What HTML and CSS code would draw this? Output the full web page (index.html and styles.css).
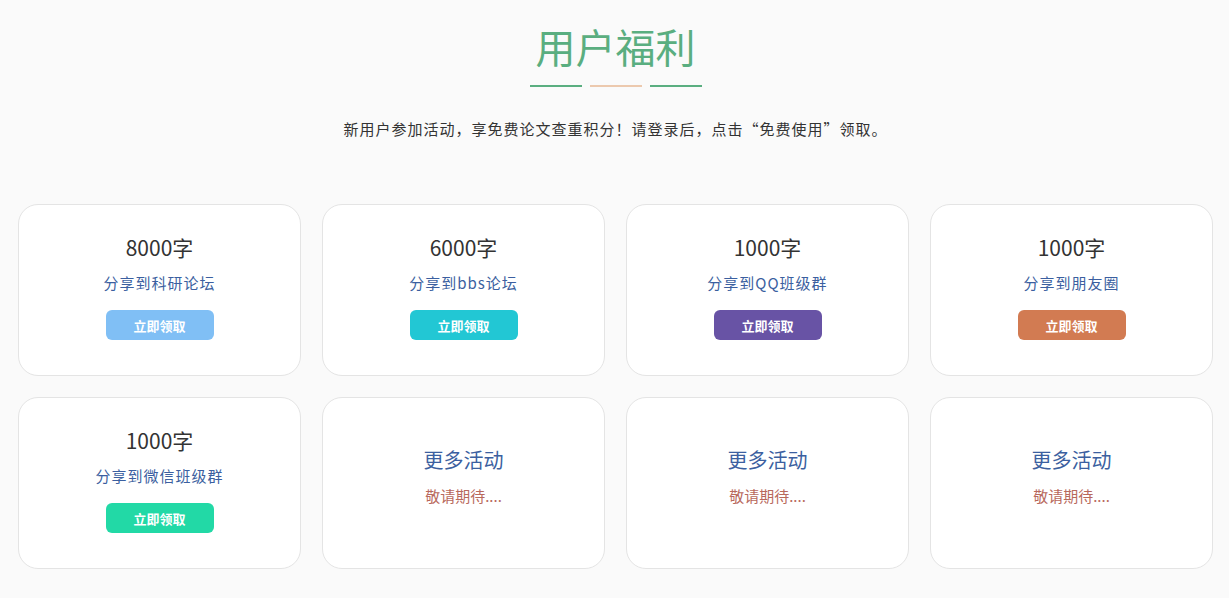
FILE: index.html
```html
<!DOCTYPE html>
<html lang="zh-CN">
<head>
  <meta charset="UTF-8" />
  <meta name="viewport" content="width=device-width, initial-scale=1.0"/>
  <title>用户福利</title>
  <link rel="stylesheet" href="styles.css">
</head>
<body>
  <div class="welfare">
    <h1 class="welfare-title">用户福利</h1>
    <div class="title-lines">
      <span class="line green"></span>
      <span class="line tan"></span>
      <span class="line green"></span>
    </div>
    <p class="welfare-desc">新用户参加活动，享免费论文查重积分！请登录后，点击“免费使用”领取。</p>

    <div class="card-grid">
      <div class="card">
        <div class="card-amount">8000字</div>
        <div class="card-name">分享到科研论坛</div>
        <button class="get-btn btn-sky">立即领取</button>
      </div>
      <div class="card">
        <div class="card-amount">6000字</div>
        <div class="card-name">分享到bbs论坛</div>
        <button class="get-btn btn-cyan">立即领取</button>
      </div>
      <div class="card">
        <div class="card-amount">1000字</div>
        <div class="card-name">分享到QQ班级群</div>
        <button class="get-btn btn-purple">立即领取</button>
      </div>
      <div class="card">
        <div class="card-amount">1000字</div>
        <div class="card-name">分享到朋友圈</div>
        <button class="get-btn btn-orange">立即领取</button>
      </div>
      <div class="card">
        <div class="card-amount">1000字</div>
        <div class="card-name">分享到微信班级群</div>
        <button class="get-btn btn-green">立即领取</button>
      </div>
      <div class="card more">
        <div class="more-title">更多活动</div>
        <div class="more-sub">敬请期待....</div>
      </div>
      <div class="card more">
        <div class="more-title">更多活动</div>
        <div class="more-sub">敬请期待....</div>
      </div>
      <div class="card more">
        <div class="more-title">更多活动</div>
        <div class="more-sub">敬请期待....</div>
      </div>
    </div>
  </div>
</body>
</html>
```

FILE: styles.css
```css
body {
  font-family: "Noto Sans CJK SC", "Noto Sans", sans-serif;
  background-color: #fafafa;
  margin: 0;
  color: #333;
}
.welfare {
  padding: 18px 16px 0 18px;
}
.welfare-title {
  text-align: center;
  font-size: 40px;
  font-weight: 400;
  color: #5aae80;
  margin: 0;
  line-height: 56px;
}
.title-lines {
  display: flex;
  justify-content: center;
  gap: 8px;
  margin-top: 11px;
}
.line {
  width: 52px;
  height: 2px;
}
.line.green {
  background-color: #5aae80;
}
.line.tan {
  background-color: #ecc9ae;
}
.welfare-desc {
  text-align: center;
  font-size: 15px;
  letter-spacing: 1px;
  margin: 32px 0 0;
  line-height: 20px;
  color: #333;
}
.card-grid {
  display: grid;
  grid-template-columns: repeat(4, 1fr);
  gap: 21px;
  margin-top: 65px;
}
.card {
  background: #fff;
  border: 1px solid #e4e4e4;
  border-radius: 20px;
  height: 172px;
  display: flex;
  flex-direction: column;
  align-items: center;
  box-sizing: border-box;
  padding-top: 28px;
}
.card-amount {
  font-size: 21px;
  line-height: 28px;
  color: #333;
}
.card-name {
  font-size: 15px;
  letter-spacing: 1px;
  line-height: 22px;
  color: #3b5fa0;
  margin-top: 11px;
}
.get-btn {
  margin-top: 16px;
  width: 108px;
  height: 30px;
  border: none;
  border-radius: 6px;
  color: #fff;
  font-family: inherit;
  font-size: 13px;
  font-weight: 700;
  cursor: pointer;
}
.btn-sky { background-color: #80bff5; }
.btn-cyan { background-color: #22c7d4; }
.btn-purple { background-color: #6853a5; }
.btn-orange { background-color: #d27b52; }
.btn-green { background-color: #22d9a6; }
.card.more {
  padding-top: 48px;
}
.more-title {
  font-size: 20px;
  line-height: 28px;
  color: #3b5fa0;
}
.more-sub {
  font-size: 15px;
  line-height: 22px;
  color: #b8695c;
  margin-top: 11px;
}
```
